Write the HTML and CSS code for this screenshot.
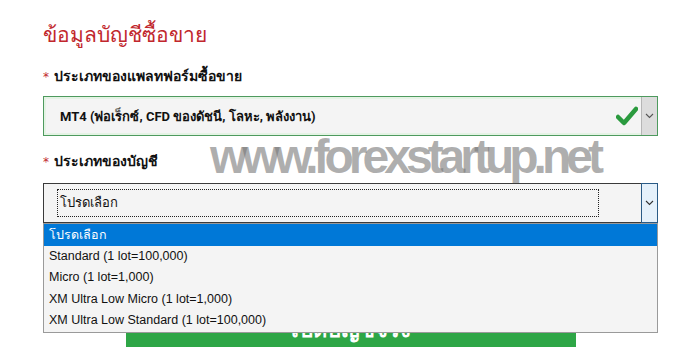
FILE: index.html
```html
<!DOCTYPE html>
<html lang="th">
<head>
    <meta charset="UTF-8">
    <title>ข้อมูลบัญชีซื้อขาย</title>
    <link rel="stylesheet" href="styles.css">
</head>
<body>
    <div class="form-wrap">
        <h2 class="form-title">ข้อมูลบัญชีซื้อขาย</h2>

        <div class="field">
            <label class="field-label"><span class="req">*</span> ประเภทของแพลทฟอร์มซื้อขาย</label>
            <div class="select select-valid">
                <span class="select-value">MT4 (ฟอเร็กซ์, CFD ของดัชนี, โลหะ, พลังงาน)</span>
                <svg class="check" width="22" height="20" viewBox="0 0 22 20">
                    <path d="M2 11 L8 17 L20 3" fill="none" stroke="#2a9a3e" stroke-width="4.5" stroke-linecap="round" stroke-linejoin="round"/>
                </svg>
                <span class="select-btn">
                    <svg width="9" height="6" viewBox="0 0 9 6"><path d="M1 1 L4.5 4.5 L8 1" fill="none" stroke="#555" stroke-width="1.1"/></svg>
                </span>
            </div>
        </div>

        <div class="field">
            <label class="field-label"><span class="req">*</span> ประเภทของบัญชี</label>
            <div class="select select-open">
                <span class="focus-box">โปรดเลือก</span>
                <span class="select-btn">
                    <svg width="9" height="6" viewBox="0 0 9 6"><path d="M1 1 L4.5 4.5 L8 1" fill="none" stroke="#333" stroke-width="1.1"/></svg>
                </span>
                <ul class="options">
                    <li class="active">โปรดเลือก</li>
                    <li>Standard (1 lot=100,000)</li>
                    <li>Micro (1 lot=1,000)</li>
                    <li>XM Ultra Low Micro (1 lot=1,000)</li>
                    <li>XM Ultra Low Standard (1 lot=100,000)</li>
                </ul>
            </div>
        </div>

        <div class="submit-row">
            <button class="submit-btn">เปิดบัญชีจริง</button>
        </div>

        <div class="watermark">www.forexstartup.net</div>
    </div>
</body>
</html>
```

FILE: styles.css
```css
body {
    margin: 0;
    background: #fff;
    font-family: Tahoma, "DejaVu Sans", "Noto Sans", sans-serif;
    color: #222;
}
.form-wrap {
    position: relative;
    width: 615px;
    padding: 20px 0 0 43px;
}
.form-title {
    margin: 0;
    font-size: 21px;
    font-weight: normal;
    line-height: 30px;
    color: #c1272d;
}
.field {
    margin-top: 16px;
}
.field + .field {
    margin-top: 15px;
}
.field-label {
    display: block;
    font-size: 14px;
    font-weight: bold;
    line-height: 20px;
    color: #111;
}
.req {
    color: #c1272d;
    font-weight: normal;
    font-size: 12px;
}
.select {
    position: relative;
    display: flex;
    align-items: center;
    height: 40px;
    margin-top: 9px;
    box-sizing: border-box;
    background: #f4f4f4;
}
.select-valid {
    border: 1px solid #4e9a5e;
    box-shadow: inset 0 0 0 2px #e4f3e4;
    padding-left: 16px;
}
.select-value {
    flex: 1;
    font-family: Roboto, Tahoma, sans-serif;
    font-size: 13px;
    font-weight: bold;
    color: #111;
}
.check {
    margin-right: 3px;
}
.select-btn {
    display: flex;
    align-items: center;
    justify-content: center;
    width: 16px;
    height: 100%;
    box-sizing: border-box;
}
.select-valid .select-btn {
    background: #dcdcdc;
    border-left: 1px solid #b5b5b5;
}
.select-open {
    margin-top: 11px;
    border: 1px solid #3a3a3a;
    border-right: none;
}
.select-open .select-btn {
    margin-left: auto;
    width: 17px;
    height: 40px;
    margin-top: -1px;
    margin-bottom: -1px;
    background: #e5f1fb;
    border: 1px solid #2a5b86;
}
.focus-box {
    width: 542px;
    height: 28px;
    margin-left: 13px;
    padding-left: 2px;
    box-sizing: border-box;
    border: 1px dotted #222;
    font-size: 13px;
    line-height: 26px;
    color: #111;
}
.options {
    position: absolute;
    top: 39px;
    left: -1px;
    right: 0;
    z-index: 2;
    margin: 0;
    padding: 0;
    list-style: none;
    background: #f4f4f4;
    border: 1px solid #9a9a9a;
    font-family: "Liberation Sans", Tahoma, sans-serif;
    font-size: 12.5px;
    color: #111;
}
.options li {
    height: 21.6px;
    line-height: 21.6px;
    padding-left: 5px;
}
.options li.active {
    background: #0078d7;
    color: #fff;
    font-family: Tahoma, "DejaVu Sans", sans-serif;
}
.submit-row {
    display: flex;
    justify-content: center;
    margin-top: 84px;
}
.submit-btn {
    display: flex;
    align-items: flex-end;
    justify-content: center;
    width: 450px;
    height: 40px;
    padding: 0 0 8px;
    border: none;
    background: #2ea646;
    color: #fff;
    font-family: Tahoma, "DejaVu Sans", sans-serif;
    font-size: 22px;
    font-weight: bold;
    line-height: 18px;
}
.watermark {
    position: absolute;
    left: 210px;
    top: 129px;
    z-index: 3;
    font-family: "Liberation Sans", Arial, sans-serif;
    font-size: 48px;
    font-weight: bold;
    letter-spacing: -5px;
    color: rgba(120, 120, 120, 0.6);
    white-space: nowrap;
    pointer-events: none;
}
```
